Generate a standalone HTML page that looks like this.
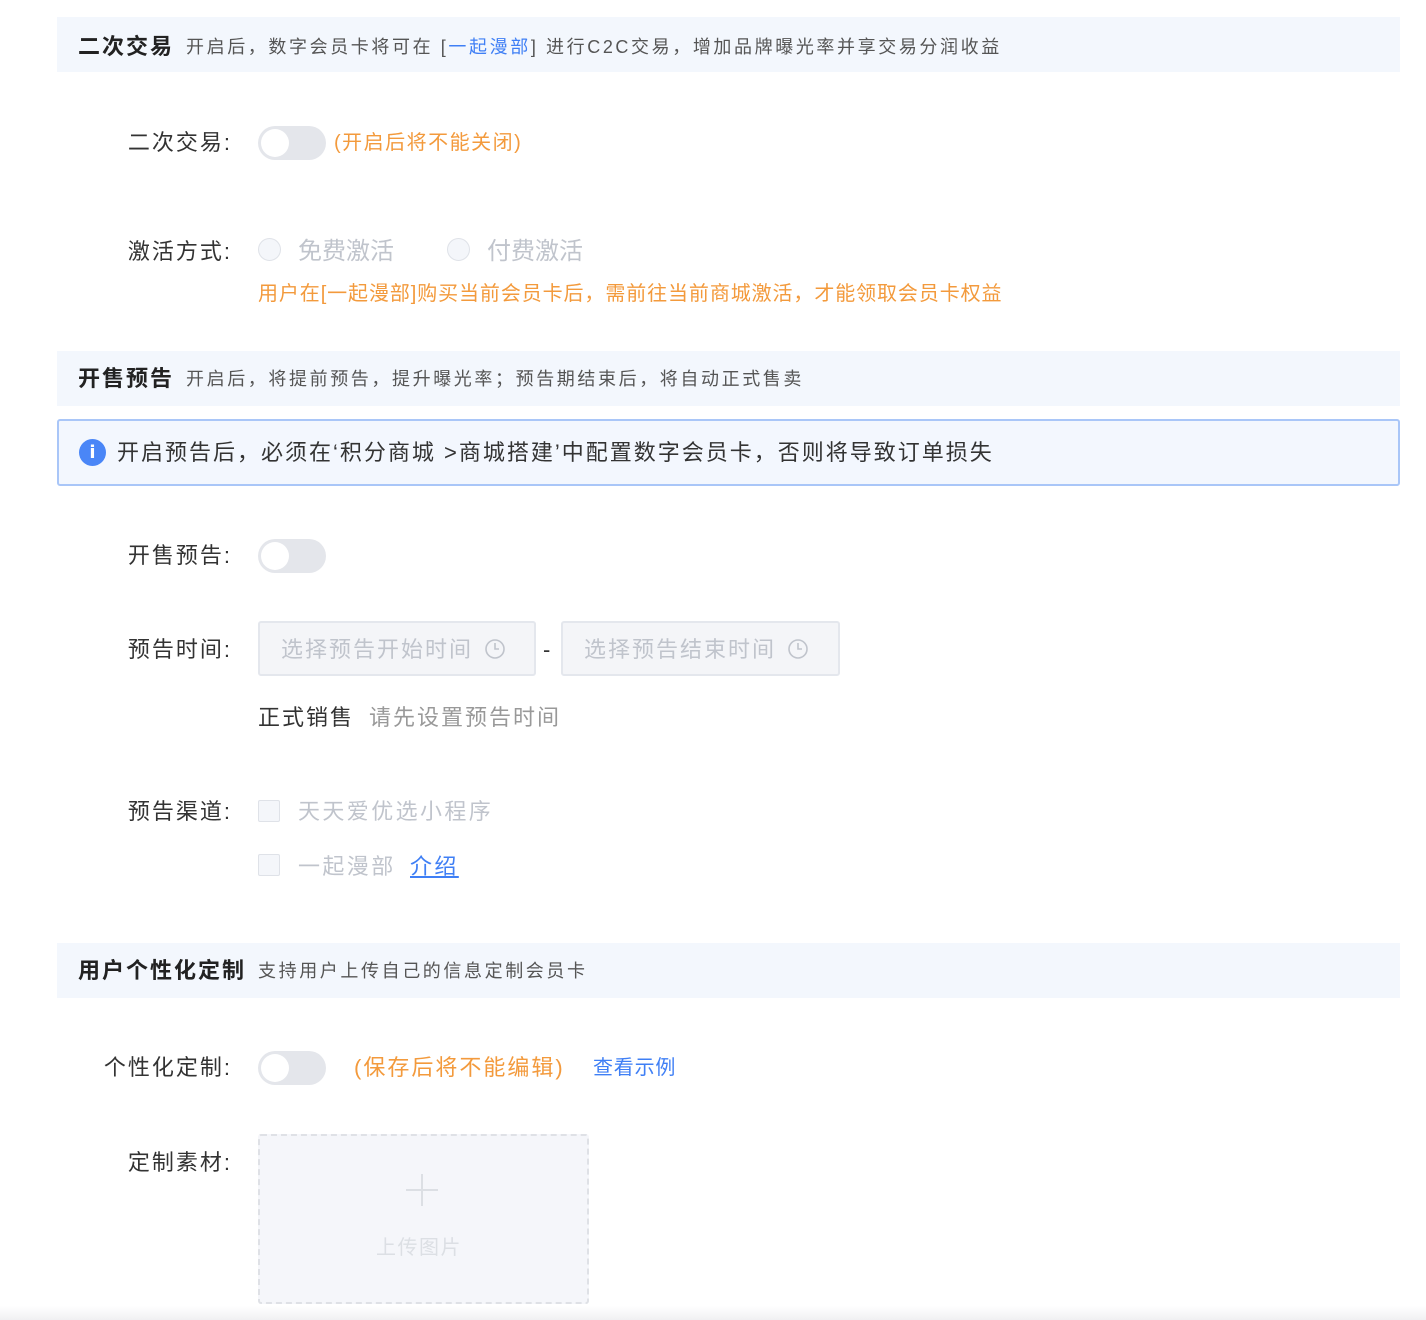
<!DOCTYPE html>
<html><head><meta charset="utf-8"><style>
*{margin:0;padding:0;box-sizing:border-box}
body{width:1426px;height:1320px;background:#fff;position:relative;overflow:hidden;font-family:"Liberation Sans","Noto Sans CJK SC",sans-serif}
.a{position:absolute;white-space:nowrap;line-height:1;letter-spacing:2px}
.hd{position:absolute;left:57px;width:1343px;height:55px;background:#f3f7fd}
.t{font-size:22px;font-weight:bold;color:#222}
.d{font-size:18px;color:#555;letter-spacing:2.6px}
.lb{font-size:22px;color:#333;text-align:right;width:202px;left:30px}
.tg{position:absolute;left:258px;width:68px;height:34px;border-radius:17px;background:#e4e6eb}
.tg:after{content:"";position:absolute;left:3px;top:3px;width:28px;height:28px;border-radius:50%;background:#fff}
.or{color:#f39a3c}
.rd{position:absolute;width:23px;height:23px;border-radius:50%;border:1.5px solid #dfe2e8;background:#f4f6fa}
.cb{position:absolute;left:258px;width:22px;height:22px;border:1.5px solid #dfe2e8;background:#f4f6fa;border-radius:2px}
.in{position:absolute;top:621px;height:55px;background:#f4f5f8;border:2px solid #e4e7ed;border-radius:3px}
.ph{font-size:22px;color:#c0c4cc}
</style></head><body>

<div class="hd" style="top:17px"></div>
<div class="a t" style="left:78px;top:36px">二次交易</div>
<div class="a d" style="left:186px;top:38px">开启后，数字会员卡将可在 [<span style="color:#3f7ff5">一起漫部</span>] 进行C2C交易，增加品牌曝光率并享交易分润收益</div>

<div class="a lb" style="top:132px">二次交易:</div>
<div class="tg" style="top:126px"></div>
<div class="a or" style="left:334px;top:133px;font-size:20px;letter-spacing:1.5px">(开启后将不能关闭)</div>

<div class="a lb" style="top:241px">激活方式:</div>
<div class="rd" style="left:258px;top:238px"></div>
<div class="a" style="left:298px;top:240px;font-size:24px;color:#c0c4cc;letter-spacing:0">免费激活</div>
<div class="rd" style="left:447px;top:238px"></div>
<div class="a" style="left:487px;top:240px;font-size:24px;color:#c0c4cc;letter-spacing:0">付费激活</div>
<div class="a or" style="left:258px;top:284px;font-size:20px;letter-spacing:0.9px">用户在[一起漫部]购买当前会员卡后，需前往当前商城激活，才能领取会员卡权益</div>

<div class="hd" style="top:351px"></div>
<div class="a t" style="left:78px;top:368px">开售预告</div>
<div class="a d" style="left:186px;top:370px">开启后，将提前预告，提升曝光率；预告期结束后，将自动正式售卖</div>

<div style="position:absolute;left:57px;top:419px;width:1343px;height:67px;background:#f3f7fe;border:2px solid #a9c6f8;border-radius:3px"></div>
<div style="position:absolute;left:79px;top:439px;width:27px;height:27px;border-radius:50%;background:#4a86f7;color:#fff;font-weight:bold;font-size:18px;text-align:center;line-height:27px;font-family:'DejaVu Sans',sans-serif">i</div>
<div class="a" style="left:117px;top:442px;font-size:22px;color:#333">开启预告后，必须在‘积分商城 &gt;商城搭建’中配置数字会员卡，否则将导致订单损失</div>

<div class="a lb" style="top:545px">开售预告:</div>
<div class="tg" style="top:539px"></div>

<div class="a lb" style="top:639px">预告时间:</div>
<div class="in" style="left:258px;width:278px"></div>
<div class="a ph" style="left:281px;top:639px">选择预告开始时间</div>
<svg class="a" style="left:484px;top:638px" width="22" height="22" viewBox="0 0 22 22"><circle cx="11" cy="11" r="9" fill="none" stroke="#c0c4cc" stroke-width="1.6"/><path d="M11 5v6h4" fill="none" stroke="#c0c4cc" stroke-width="1.6"/></svg>
<div class="a" style="left:543px;top:639px;font-size:22px;color:#333">-</div>
<div class="in" style="left:561px;width:279px"></div>
<div class="a ph" style="left:584px;top:639px">选择预告结束时间</div>
<svg class="a" style="left:787px;top:638px" width="22" height="22" viewBox="0 0 22 22"><circle cx="11" cy="11" r="9" fill="none" stroke="#c0c4cc" stroke-width="1.6"/><path d="M11 5v6h4" fill="none" stroke="#c0c4cc" stroke-width="1.6"/></svg>
<div class="a" style="left:258px;top:707px;font-size:22px;color:#333">正式销售</div>
<div class="a" style="left:369px;top:707px;font-size:22px;color:#999">请先设置预告时间</div>

<div class="a lb" style="top:801px">预告渠道:</div>
<div class="cb" style="top:800px"></div>
<div class="a ph" style="left:298px;top:801px;letter-spacing:2.4px">天天爱优选小程序</div>
<div class="cb" style="top:854px"></div>
<div class="a ph" style="left:298px;top:856px;letter-spacing:2.4px">一起漫部</div>
<div class="a" style="left:410px;top:856px;font-size:22px;color:#3f7ff5;text-decoration:underline;letter-spacing:2.4px">介绍</div>

<div class="hd" style="top:943px"></div>
<div class="a t" style="left:78px;top:960px">用户个性化定制</div>
<div class="a d" style="left:258px;top:962px">支持用户上传自己的信息定制会员卡</div>

<div class="a lb" style="top:1057px">个性化定制:</div>
<div class="tg" style="top:1051px"></div>
<div class="a or" style="left:354px;top:1057px;font-size:22px">(保存后将不能编辑)</div>
<div class="a" style="left:593px;top:1058px;font-size:20px;color:#3f7ff5;letter-spacing:0.8px">查看示例</div>

<div class="a lb" style="top:1152px">定制素材:</div>
<div style="position:absolute;left:258px;top:1134px;width:331px;height:170px;border:2px dashed #dfe1e6;background:#f5f6fa;border-radius:3px"></div>
<div style="position:absolute;left:406px;top:1189px;width:32px;height:2px;background:#dcdfe4"></div>
<div style="position:absolute;left:421px;top:1174px;width:2px;height:32px;background:#dcdfe4"></div>
<div class="a" style="left:376px;top:1238px;font-size:20px;color:#dcdfe4;letter-spacing:1.5px">上传图片</div>

<div style="position:absolute;left:0;top:1306px;width:1426px;height:14px;background:linear-gradient(#fff,#f0f0f2)"></div>
</body></html>
